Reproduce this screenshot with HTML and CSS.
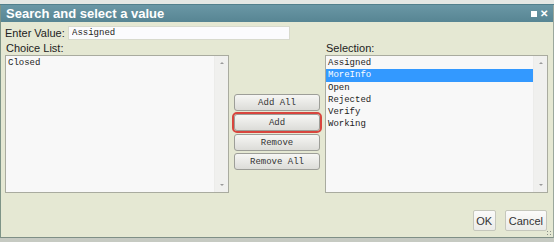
FILE: index.html
```html
<!DOCTYPE html>
<html lang="en">
<head>
  <meta charset="UTF-8" />
  <title>Search and select a value</title>
  <link rel="stylesheet" href="styles.css">
</head>
<body>

  <div class="backdrop"></div>

  <div class="dialog">
    <div class="titlebar">
      <span class="title">Search and select a value</span>
      <span class="title-icons">
        <span class="icon-max"></span>
        <span class="icon-close">&#x2715;</span>
      </span>
    </div>

    <div class="content">
      <div class="value-row">
        <label for="valor">Enter Value:</label>
        <input type="text" id="valor" value="Assigned" />
      </div>

      <div class="columns">
        <div class="col">
          <div class="col-label">Choice List:</div>
          <div class="listbox">
            <ul class="items">
              <li>Closed</li>
            </ul>
            <div class="scroll">
              <span class="arrow up"></span>
              <span class="arrow down"></span>
            </div>
          </div>
        </div>

        <div class="actions">
          <button class="btn">Add All</button>
          <button class="btn focused">Add</button>
          <button class="btn">Remove</button>
          <button class="btn last">Remove All</button>
        </div>

        <div class="col">
          <div class="col-label">Selection:</div>
          <div class="listbox">
            <ul class="items">
              <li>Assigned</li>
              <li class="selected">MoreInfo</li>
              <li>Open</li>
              <li>Rejected</li>
              <li>Verify</li>
              <li>Working</li>
            </ul>
            <div class="scroll">
              <span class="arrow up"></span>
              <span class="arrow down"></span>
            </div>
          </div>
        </div>
      </div>

      <div class="footer">
        <button class="btn-dlg ok">OK</button>
        <button class="btn-dlg">Cancel</button>
      </div>
    </div>

    <span class="grip"></span>
  </div>

  <div class="bottom-strip"></div>

</body>
</html>
```

FILE: styles.css
```css
body {
  margin: 0;
  width: 554px;
  height: 242px;
  overflow: hidden;
  background-color: #c3c8c0;
  font-family: 'Liberation Sans', Arial, sans-serif;
  font-size: 11px;
  color: #222;
}

.backdrop {
  height: 5px;
  background-color: #e4e7e3;
  border-bottom: 1px solid #52808c;
  box-sizing: border-box;
}

.dialog {
  position: relative;
  height: 233px;
  background-color: #e5e8d3;
  border-left: 1px solid #7e9487;
  border-right: 1px solid #9aa79c;
  border-bottom: 1px solid #7f8f86;
  box-sizing: border-box;
}

.titlebar {
  height: 17px;
  background: linear-gradient(#6a97a5, #578593);
  color: white;
  display: flex;
  align-items: center;
  justify-content: space-between;
  padding: 0 5px 0 5px;
}

.title {
  font-weight: bold;
  font-size: 13px;
}

.title-icons {
  display: flex;
  align-items: center;
  gap: 3px;
}

.icon-max {
  width: 6px;
  height: 6px;
  background-color: white;
}

.icon-close {
  font-size: 10px;
  font-weight: bold;
}

.content {
  padding: 4px 5px 0 4px;
}

.value-row {
  display: flex;
  align-items: center;
  height: 14px;
}

.value-row label {
  width: 63px;
}

.value-row input {
  width: 222px;
  height: 14px;
  box-sizing: border-box;
  margin: 0;
  padding: 0 3px;
  border: 1px solid #d8dacd;
  background-color: #fbfbfd;
  font-family: 'Liberation Mono', 'Courier New', monospace;
  font-size: 9px;
  color: #222;
}

.columns {
  display: grid;
  grid-template-columns: 224px 86px 223px;
  gap: 5px;
  margin-top: 1px;
}

.col-label {
  height: 14px;
  line-height: 14px;
  padding-left: 1px;
}

.listbox {
  height: 138px;
  display: flex;
  background-color: #f8f8f8;
  border: 1px solid #a9ab9f;
  box-sizing: border-box;
}

.items {
  flex: 1;
  list-style: none;
  margin: 0;
  padding: 1px 0 0 0;
  font-family: 'Liberation Mono', 'Courier New', monospace;
  font-size: 9px;
  line-height: 12.3px;
}

.items li {
  padding-left: 2px;
}

.items li.selected {
  background-color: #3399ff;
  color: white;
}

.scroll {
  width: 13px;
  background-color: #f0f0ee;
  border-left: 1px solid #ececea;
  display: flex;
  flex-direction: column;
  justify-content: space-between;
  align-items: center;
  padding: 6px 0 6px;
}

.arrow {
  width: 0;
  height: 0;
  border-left: 2px solid transparent;
  border-right: 2px solid transparent;
}

.arrow.up {
  border-bottom: 2px solid #9a9a9a;
}

.arrow.down {
  border-top: 2px solid #9a9a9a;
}

.actions {
  display: flex;
  flex-direction: column;
  padding-top: 53px;
}

.btn {
  height: 17px;
  margin: 0 0 1px 0;
  padding: 0;
  background: linear-gradient(#f6f6f4, #dcdcd8);
  border: 1px solid #9d9e98;
  border-radius: 3px;
  font-family: 'Liberation Mono', 'Courier New', monospace;
  font-size: 9px;
  color: #333;
  cursor: pointer;
}

.btn.focused {
  margin: 2px 0 3px 0;
  outline: 2px solid #d8453e;
}

.btn.last {
  margin-top: 1px;
}

.footer {
  display: flex;
  justify-content: flex-end;
  gap: 9px;
  margin-top: 17px;
  padding-right: 1px;
}

.btn-dlg {
  height: 21px;
  padding: 0 3px;
  background: linear-gradient(#fbfbfa, #ebebe8);
  border: 1px solid #c5c7bc;
  border-radius: 2px;
  font-family: 'Liberation Sans', Arial, sans-serif;
  font-size: 11px;
  color: #333;
}

.btn-dlg.ok {
  width: 23px;
  padding: 0;
}

.grip {
  position: absolute;
  right: 1px;
  bottom: 1px;
  width: 6px;
  height: 6px;
  background-image: radial-gradient(#8a8f88 40%, transparent 45%);
  background-size: 3px 3px;
}

.bottom-strip {
  height: 4px;
  background-color: #c6cac2;
}
```
